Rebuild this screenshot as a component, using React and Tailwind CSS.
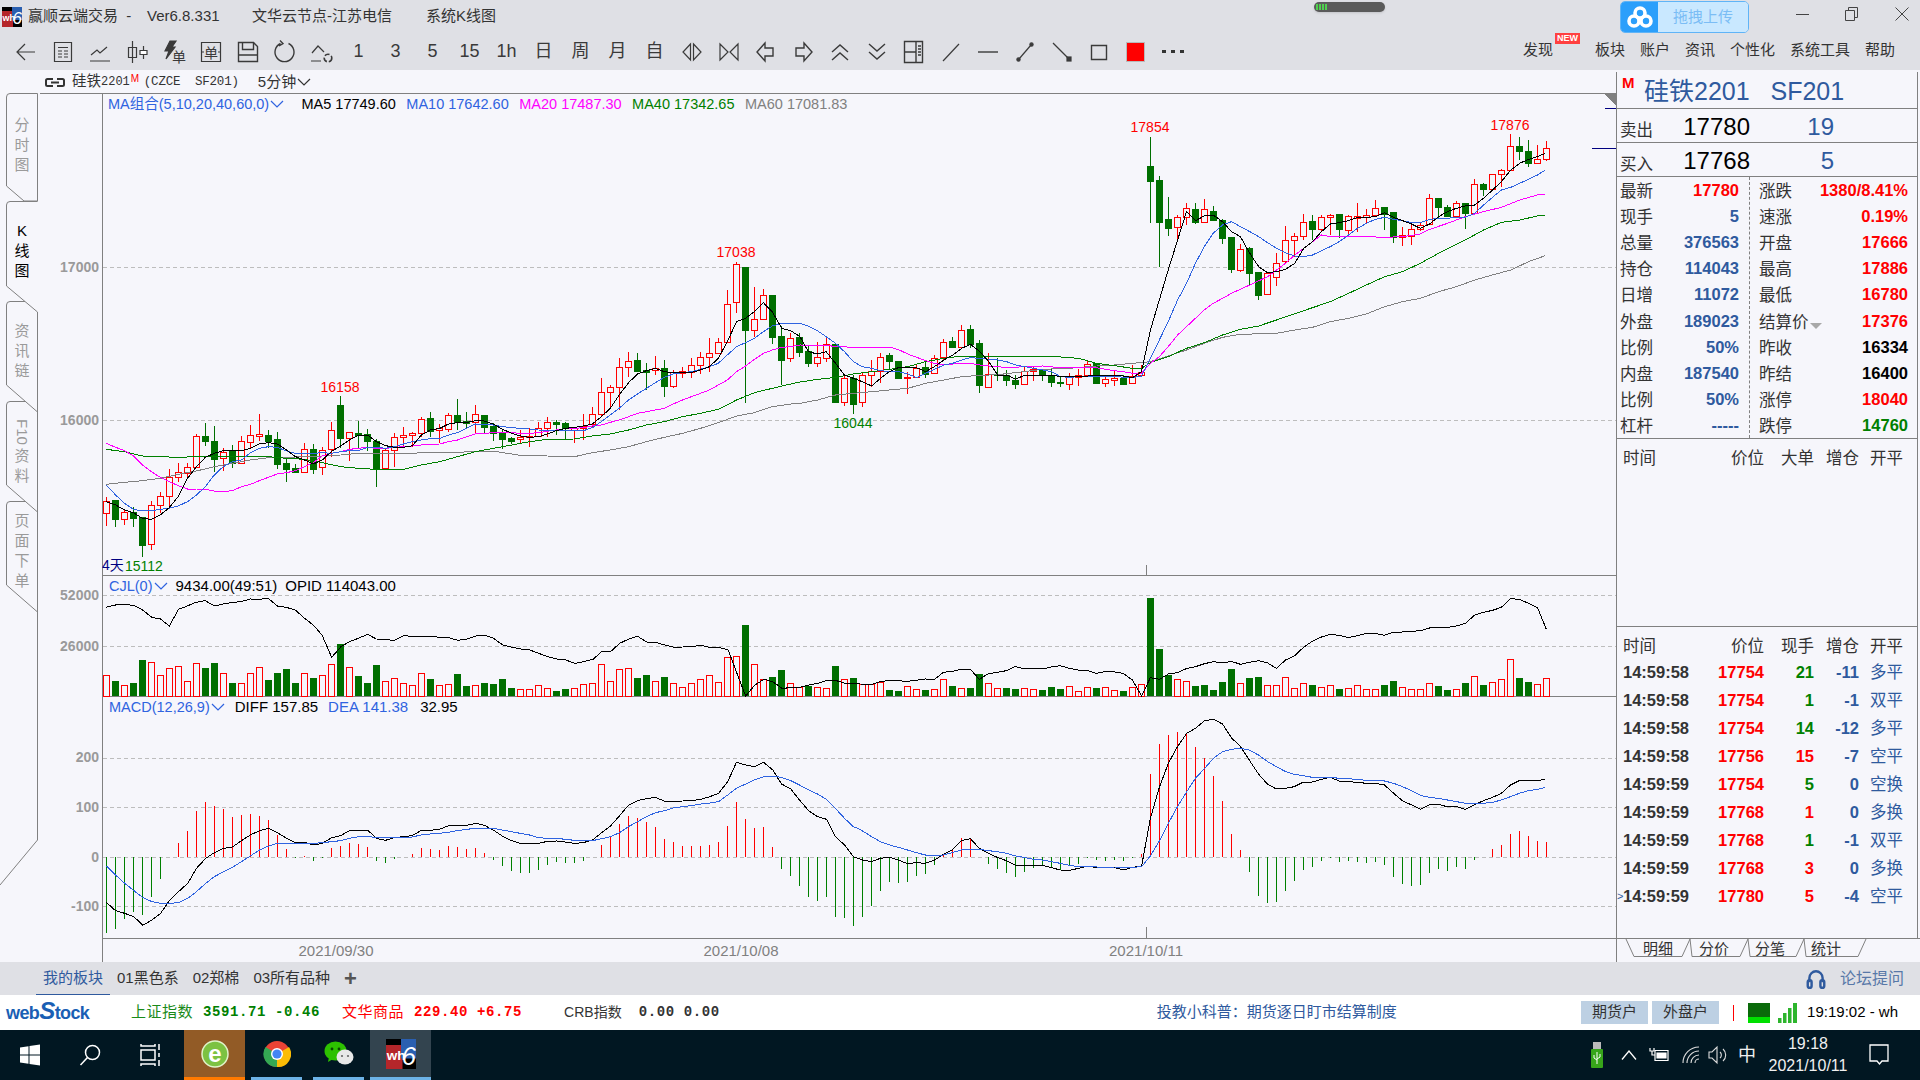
import React from "react";

const BG = "#f6f6fb";
const RED = "#ff0000";
const GREEN = "#006f00";

// zoom-crop readings, turned into page coordinates below
const fromA = ([x, y]) => [100 + x / 2.24, 240 + y / 3];
const fromB = ([x, y]) => [800 + x / 1.912, 100 + y / 3];
const fromV1 = ([x, y]) => [100 + x / 2.063, 570 + y / 3];
const fromV2 = ([x, y]) => [860 + x / 2.063, 570 + y / 3];

// [red?, high, bodyTop, bodyBottom, low]
const candlesA = [
  [1,770,782,820,858],[0,780,780,838,860],[1,808,817,838,855],[0,800,817,833,862],[0,830,832,914,950],[1,782,794,913,930],[1,755,767,795,820],[1,687,712,767,797],
  [1,670,695,710,727],[1,668,682,698,712],[1,582,589,680,685],[0,548,588,603,617],[0,558,603,656,697],[1,625,635,655,693],[0,615,631,668,685],[1,588,604,668,672],
  [1,556,586,605,625],[1,522,583,587,603],[0,570,586,603,625],[0,577,598,671,687],[0,650,670,686,725],[0,672,685,697,700],[1,610,628,697,700],[0,612,628,686,702],
  [1,620,629,682,704],[1,546,571,628,650],[0,468,495,593,625],[1,575,577,595,662],[0,543,580,584,625],[0,567,583,602,632],[0,598,603,688,740],[1,625,631,683,690],
  [1,578,590,631,680],[1,562,586,590,620],[1,575,580,586,620],[1,532,538,580,590],[0,516,534,573,590],[1,552,565,570,608],[1,520,526,566,575],[0,477,525,546,570],
  [0,516,543,549,565],[1,495,523,547,580],[0,525,526,560,580],[0,548,558,579,602],[0,570,578,596,628],[0,590,595,603,612],[1,570,592,598,610],[1,565,588,592,620],
  [1,545,565,588,590],[1,532,547,565,590],[0,540,546,551,585],[0,545,549,565,598],[1,560,565,570,608],[1,522,557,565,600],[1,500,523,553,565],[1,415,455,523,530],
  [1,435,442,455,505],[1,355,380,442,510],[1,337,362,380,410],[0,340,360,392,395],[0,370,391,397,450],[1,348,385,390,405],[0,360,385,437,472],[1,390,397,437,445],
  [1,380,394,398,415],[1,355,374,396,415],[1,335,352,374,402],[1,294,338,352,395],[1,295,305,338,340],[1,150,193,305,310],[1,65,73,185,220],[0,80,80,270,488],
  [1,140,238,271,290],[1,148,166,236,240],[0,165,165,290,312],[0,258,289,360,435],[1,280,293,355,365],
];
const candlesB = [
  [0,700,712,755,770],[0,735,752,790,800],[1,725,772,788,800],[1,710,732,773,785],[0,730,732,905,908],[1,822,835,905,918],[0,825,835,912,942],[1,815,825,907,920],
  [1,780,812,825,860],[1,760,770,812,850],[0,758,766,782,810],[0,782,782,833,835],[1,815,832,835,882],[1,795,803,832,835],[0,785,802,822,835],[1,765,773,820,822],
  [1,718,725,772,780],[0,710,724,740,745],[1,675,689,740,745],[0,675,687,733,745],[0,720,730,855,878],[1,760,823,860,860],[0,775,823,826,842],[0,810,825,840,858],
  [0,825,840,852,866],[1,800,812,851,855],[1,800,808,813,842],[0,808,808,825,842],[0,805,825,845,860],[0,828,845,848,860],[1,820,832,851,870],[1,808,824,832,858],
  [1,780,793,825,830],[0,790,790,848,850],[1,825,838,848,860],[1,812,835,839,858],[0,825,833,851,852],[1,795,828,848,850],[1,795,815,825,830],[0,110,198,243,370],
  [0,228,240,365,500],[0,292,357,383,408],[1,345,352,380,420],[1,308,325,352,375],[0,310,327,365,372],[1,297,328,365,368],[0,318,333,360,362],[0,358,360,413,432],
  [0,410,412,507,518],[1,432,448,510,515],[0,440,444,520,558],[0,516,516,585,600],[1,515,518,583,585],[1,458,490,532,558],[1,378,421,482,490],[1,398,407,421,470],
  [1,342,367,407,420],[0,345,363,387,420],[1,345,352,386,395],[1,342,344,352,405],[0,343,343,387,415],[1,345,349,389,405],[1,310,349,353,395],[1,327,344,352,368],
  [1,300,325,345,350],[0,322,322,343,390],[0,335,336,412,430],[1,380,406,411,437],[1,375,388,407,435],[1,365,375,388,392],[1,282,295,372,375],[0,295,295,320,358],
  [0,315,322,348,350],[1,303,310,347,350],[0,310,310,340,387],[1,238,253,338,340],[0,250,252,266,288],[1,222,223,266,268],[1,208,211,223,260],[1,102,139,209,212],
  [0,112,139,152,180],[0,120,153,188,200],[1,135,178,190,192],[1,123,145,178,183],
];
const candles = [
  ...candlesA.map(([r, ...v]) => [r, ...v.map((y) => 240 + y / 3)]),
  ...candlesB.map(([r, ...v]) => [r, ...v.map((y) => 100 + y / 3)]),
];

const ma5 = [
  ...[[14,785],[35,795],[55,810],[75,818],[95,835],[115,838],[135,825],[155,803],[175,770],[196,715],[216,680],[236,652],[256,640],[276,632],[297,632],[317,632],[337,625],[357,612],[377,608],[397,612],[418,630],[438,650],[458,660],[478,672],[498,660],[518,635],[539,618],[559,600],[579,585],[599,585],[619,605],[640,617],[660,622],[680,622],[700,617],[720,585],[740,570],[761,565],[781,552],[801,548],[821,548],[841,542],[861,543],[881,552],[902,568],[922,580],[942,588],[962,592],[982,590],[1002,582],[1022,572],[1043,565],[1063,562],[1083,558],[1103,552],[1123,530],[1143,505],[1163,465],[1184,428],[1204,402],[1224,392],[1244,385],[1264,395],[1284,398],[1305,398],[1325,397],[1345,390],[1365,380],[1385,355],[1405,305],[1426,245],[1446,235],[1466,215],[1486,188],[1506,215],[1527,265],[1547,272]].map(fromA),
  ...[[0,710],[16,755],[33,762],[50,755],[68,790],[85,825],[102,835],[119,845],[137,858],[154,835],[171,815],[188,803],[206,803],[223,803],[240,815],[257,800],[275,780],[292,765],[309,745],[326,733],[344,755],[361,785],[378,825],[395,825],[412,838],[430,825],[447,825],[464,825],[481,825],[498,830],[515,830],[533,828],[550,828],[567,826],[584,826],[601,826],[618,828],[636,833],[653,815],[670,690],[687,600],[704,510],[722,420],[739,335],[756,362],[773,348],[790,345],[808,365],[825,395],[842,410],[860,460],[877,500],[894,518],[911,515],[928,508],[946,490],[963,445],[980,425],[997,395],[1014,372],[1031,368],[1049,362],[1066,352],[1083,352],[1100,350],[1118,338],[1135,352],[1152,362],[1169,372],[1186,385],[1204,372],[1221,350],[1238,335],[1255,325],[1272,318],[1290,315],[1307,295],[1324,270],[1341,245],[1359,210],[1376,190],[1393,178],[1410,170],[1425,160]].map(fromB),
];
const ma10 = [
  ...[[14,735],[35,765],[55,790],[75,808],[95,813],[115,812],[135,808],[155,805],[175,798],[196,785],[216,765],[236,740],[256,705],[276,680],[297,665],[317,660],[337,638],[357,625],[377,620],[397,622],[418,633],[438,640],[458,642],[478,640],[498,638],[518,640],[539,635],[559,632],[579,632],[599,622],[619,622],[640,625],[660,620],[680,612],[700,605],[720,600],[740,596],[761,595],[781,585],[801,578],[821,565],[841,552],[861,553],[881,555],[902,560],[922,563],[942,565],[962,567],[982,570],[1002,572],[1022,573],[1043,572],[1063,573],[1083,572],[1103,563],[1123,545],[1143,525],[1163,505],[1184,480],[1204,462],[1224,445],[1244,428],[1264,412],[1284,402],[1305,398],[1325,395],[1345,388],[1365,380],[1385,370],[1405,345],[1426,320],[1446,308],[1466,295],[1486,275],[1506,258],[1527,250],[1547,250]].map(fromA),
  ...[[0,670],[16,678],[33,692],[50,710],[68,730],[85,755],[102,785],[119,800],[137,805],[154,812],[171,815],[188,815],[206,822],[223,833],[240,820],[257,808],[275,795],[292,790],[309,780],[326,773],[344,775],[361,778],[378,780],[395,785],[412,795],[430,800],[447,805],[464,810],[481,815],[498,830],[515,832],[533,830],[550,828],[567,828],[584,828],[601,828],[618,832],[636,833],[653,828],[670,775],[687,720],[704,665],[722,600],[739,550],[756,490],[773,440],[790,400],[808,375],[825,365],[842,380],[860,395],[877,410],[894,428],[911,445],[928,458],[946,468],[963,470],[980,465],[997,452],[1014,440],[1031,425],[1049,405],[1066,385],[1083,370],[1100,358],[1118,352],[1135,358],[1152,362],[1169,368],[1186,368],[1204,358],[1221,355],[1238,355],[1255,352],[1272,352],[1290,340],[1307,315],[1324,292],[1341,270],[1359,262],[1376,250],[1393,238],[1410,225],[1425,210]].map(fromB),
];
const ma20 = [
  ...[[14,610],[35,622],[55,632],[75,648],[95,675],[115,695],[135,712],[155,725],[175,737],[196,747],[216,747],[236,748],[256,753],[276,755],[297,752],[317,740],[337,733],[357,722],[377,712],[397,702],[418,698],[438,692],[458,680],[478,668],[498,648],[518,640],[539,635],[559,628],[579,625],[599,622],[619,625],[640,625],[660,622],[680,620],[700,618],[720,615],[740,613],[761,612],[781,605],[801,600],[821,590],[841,582],[861,580],[881,578],[902,578],[922,578],[942,580],[962,580],[982,578],[1002,574],[1022,570],[1043,566],[1063,565],[1083,563],[1103,558],[1123,555],[1143,547],[1163,540],[1184,530],[1204,520],[1224,515],[1244,510],[1264,505],[1284,492],[1305,480],[1325,470],[1345,460],[1365,450],[1385,435],[1405,420],[1426,395],[1446,378],[1466,358],[1486,340],[1506,330],[1527,322],[1547,320]].map(fromA),
  ...[[0,735],[50,737],[100,742],[137,743],[175,743],[190,750],[206,762],[223,772],[240,782],[257,790],[275,795],[292,792],[309,790],[326,790],[344,795],[361,798],[378,800],[395,803],[430,800],[464,798],[498,803],[533,803],[567,803],[584,808],[601,812],[618,815],[636,820],[653,820],[670,790],[687,770],[704,740],[722,705],[739,680],[756,655],[773,630],[790,610],[808,595],[825,580],[860,555],[894,530],[928,490],[946,465],[963,445],[980,425],[997,405],[1014,410],[1049,410],[1083,410],[1118,412],[1152,410],[1186,402],[1204,388],[1238,370],[1272,350],[1307,335],[1341,322],[1376,300],[1410,285],[1425,282]].map(fromB),
];
const ma40 = [
  ...[[14,628],[55,635],[95,648],[135,650],[175,652],[216,650],[256,650],[297,649],[337,649],[377,650],[418,655],[458,658],[498,668],[539,680],[579,685],[619,688],[680,688],[720,675],[761,665],[801,650],[841,635],[881,625],[922,615],[962,605],[1002,598],[1063,597],[1103,588],[1143,582],[1184,570],[1224,555],[1264,545],[1305,530],[1345,520],[1385,508],[1426,480],[1466,458],[1506,445],[1547,432]].map(fromA),
  ...[[0,846],[34,838],[68,832],[102,822],[137,815],[171,808],[206,800],[240,785],[275,775],[309,768],[344,768],[378,770],[430,770],[490,770],[533,775],[567,790],[601,797],[636,805],[653,805],[670,788],[704,770],[739,745],[773,728],[808,705],[842,688],[877,678],[911,660],[963,632],[1014,605],[1049,580],[1083,555],[1118,530],[1152,515],[1186,490],[1221,460],[1272,420],[1307,390],[1341,367],[1376,360],[1410,348],[1425,346]].map(fromB),
];
const ma60 = [
  ...[[14,733],[55,727],[95,722],[135,715],[175,703],[216,693],[256,680],[297,670],[337,660],[377,653],[418,652],[458,650],[498,648],[539,645],[579,640],[619,640],[680,640],[740,638],[801,637],[861,633],[881,633],[902,638],[942,646],[1002,648],[1063,650],[1103,638],[1143,630],[1184,620],[1224,605],[1264,592],[1305,580],[1345,565],[1385,548],[1426,528],[1466,518],[1506,500],[1547,492]].map(fromA),
  ...[[0,910],[34,900],[68,885],[102,880],[137,875],[171,870],[206,865],[240,850],[275,840],[309,830],[344,826],[378,824],[412,818],[464,808],[515,805],[567,798],[601,795],[636,790],[670,785],[704,768],[739,750],[773,730],[808,712],[842,703],[911,700],[946,690],[980,682],[1014,665],[1049,655],[1083,642],[1118,620],[1152,605],[1186,595],[1221,575],[1255,560],[1290,540],[1324,525],[1359,510],[1393,485],[1425,467]].map(fromB),
];

// volume bars: [red?, top] on the zoom scale, baseline 378
const volume = [
  [1,316],[0,333],[1,346],[0,339],[0,270],[1,277],[1,316],[1,295],[1,289],[1,334],[1,280],[0,294],[0,279],[1,310],[0,339],[1,340],[1,310],[1,292],[0,330],[0,309],[0,297],[0,339],[1,310],[0,324],[1,316],[1,283],[0,222],[1,292],[0,318],[0,339],[0,285],[1,332],[1,325],[1,340],[1,346],[1,310],[0,327],[1,346],[1,343],[0,312],[0,348],[1,346],[0,339],[0,342],[0,327],[0,354],[1,358],[1,358],[1,346],[1,354],[0,363],[0,357],[1,354],[1,343],[1,340],[1,283],[1,332],[1,298],[1,295],[0,324],[0,315],[1,334],[0,321],[1,340],[1,352],[1,340],[1,328],[1,316],[1,337],[1,262],[1,259],[0,165],[1,283],[1,328],[0,321],[0,300],[1,340],[1,352],[0,348],[1,352],[1,355],[0,288],[1,328],[0,324],
  [1,342],[1,342],[1,337],[0,360],[0,363],[1,349],[1,358],[0,360],[1,358],[1,328],[0,348],[1,355],[0,354],[0,312],[1,340],[1,355],[0,354],[0,357],[1,355],[1,358],[0,360],[0,351],[0,357],[1,349],[1,364],[1,352],[0,354],[1,352],[1,361],[0,363],[1,352],[1,343],[0,84],[0,237],[0,315],[1,328],[1,334],[0,348],[0,345],[0,360],[0,336],[0,297],[1,340],[0,324],[0,321],[1,346],[1,346],[1,322],[1,355],[1,340],[0,345],[1,352],[1,346],[0,357],[1,355],[1,346],[1,358],[1,358],[0,345],[0,333],[1,352],[1,358],[1,358],[1,340],[0,348],[0,360],[1,358],[0,339],[1,319],[0,345],[1,337],[1,328],[1,268],[0,324],[0,336],[1,343],[1,325],
];
const cjl = [
  ...[[12,112],[35,104],[55,103],[72,108],[88,120],[107,142],[125,147],[143,168],[162,118],[180,108],[198,97],[217,92],[236,108],[254,102],[273,97],[291,95],[310,87],[328,88],[347,85],[366,108],[384,112],[403,120],[422,145],[440,165],[458,195],[478,262],[497,230],[515,215],[533,205],[552,193],[570,207],[589,208],[606,212],[626,197],[645,199],[664,199],[682,200],[720,203],[738,211],[757,207],[775,198],[794,196],[812,205],[831,225],[850,232],[868,237],[887,240],[905,250],[924,260],[943,267],[961,270],[980,280],[998,275],[1017,268],[1035,245],[1054,244],[1072,220],[1091,207],[1109,199],[1128,216],[1146,217],[1165,225],[1184,232],[1202,231],[1221,230],[1240,226],[1258,232],[1277,232],[1296,240],[1314,310],[1332,378],[1351,345],[1370,328],[1388,335],[1407,355],[1426,353],[1444,352],[1463,345],[1481,340],[1500,331],[1519,332],[1537,340]].map(fromV1),
  ...[[0,342],[24,343],[42,335],[61,331],[98,334],[135,327],[154,328],[172,307],[190,304],[209,298],[228,298],[246,328],[265,311],[283,307],[302,302],[320,290],[339,296],[376,297],[395,291],[413,287],[432,295],[450,300],[469,301],[487,310],[506,305],[525,306],[543,310],[562,330],[581,378],[599,323],[618,328],[636,312],[655,308],[673,296],[692,290],[711,281],[729,275],[748,279],[766,274],[785,283],[803,277],[822,272],[840,278],[859,295],[878,270],[896,258],[915,232],[933,214],[952,201],[970,193],[989,196],[1007,203],[1026,197],[1045,190],[1063,190],[1082,196],[1100,187],[1119,186],[1138,184],[1156,182],[1175,174],[1193,172],[1212,172],[1230,168],[1249,160],[1268,135],[1286,127],[1305,121],[1323,112],[1342,86],[1360,88],[1379,100],[1398,114],[1416,178]].map(fromV2),
];

// MACD bars: end y on the zoom scale, zero at 862
const macdBars = [
  1088,1076,1046,1026,1034,980,926,862,820,783,723,697,708,717,741,736,733,737,750,795,838,863,858,873,865,834,827,818,822,830,873,879,866,862,853,833,837,840,828,831,837,834,849,870,888,903,909,908,900,885,875,880,880,873,860,826,802,762,738,744,756,770,807,816,828,828,828,825,816,768,696,747,774,771,831,897,918,947,980,992,980,1040,1043,1067,
  1040,1008,963,936,938,935,917,912,885,853,838,804,804,862,882,897,908,920,905,893,888,895,900,888,882,863,870,873,870,873,863,853,612,522,495,487,490,530,565,618,693,792,840,906,978,998,995,963,932,900,891,873,863,877,873,875,879,877,885,921,942,947,945,908,897,902,891,897,870,860,837,825,792,783,798,813,816,
];
const diff = [
  ...[[13,997],[32,1022],[51,1030],[70,1040],[88,1066],[107,1050],[125,1030],[144,990],[162,965],[181,940],[199,895],[218,865],[236,848],[255,835],[273,831],[292,812],[310,795],[329,782],[348,775],[366,788],[385,805],[403,818],[422,817],[440,825],[459,820],[478,803],[496,797],[515,782],[533,780],[552,780],[570,805],[589,811],[607,803],[626,800],[644,797],[662,782],[681,781],[700,778],[718,768],[737,766],[756,766],[775,760],[793,766],[811,780],[830,798],[849,812],[867,820],[886,821],[905,820],[923,814],[942,813],[960,816],[979,820],[997,818],[1016,810],[1035,788],[1053,768],[1072,737],[1090,706],[1109,692],[1127,686],[1146,682],[1165,694],[1183,694],[1202,693],[1220,692],[1239,688],[1258,680],[1276,670],[1295,635],[1313,577],[1332,585],[1350,590],[1369,577],[1388,600],[1406,642],[1425,657],[1443,690],[1462,722],[1480,740],[1499,748],[1517,800],[1536,825],[1554,860]].map(fromV1),
  ...[[5,870],[24,875],[42,865],[61,862],[79,870],[98,881],[116,878],[135,880],[154,870],[172,853],[190,840],[209,812],[228,806],[246,835],[265,850],[283,862],[302,872],[321,886],[339,886],[358,886],[376,886],[395,893],[413,900],[432,901],[451,895],[469,888],[488,893],[506,894],[525,893],[544,900],[562,892],[581,888],[599,745],[618,650],[636,580],[655,530],[674,490],[692,475],[711,452],[729,448],[748,462],[766,503],[785,530],[803,570],[822,612],[841,643],[859,657],[878,655],[896,650],[915,636],[933,636],[952,628],[970,622],[989,633],[1008,635],[1026,637],[1045,640],[1064,640],[1082,645],[1101,670],[1119,692],[1138,705],[1156,718],[1175,704],[1193,702],[1212,711],[1231,710],[1249,718],[1268,704],[1286,692],[1305,682],[1323,670],[1342,645],[1360,632],[1379,632],[1398,632],[1414,628]].map(fromV2),
];
const dea = [
  ...[[13,888],[32,915],[51,940],[70,962],[88,982],[107,995],[125,1000],[144,1000],[162,998],[181,985],[199,965],[218,940],[236,920],[255,905],[273,892],[292,875],[310,858],[329,840],[348,828],[366,820],[385,820],[403,820],[422,820],[440,820],[459,818],[478,815],[496,812],[515,805],[533,800],[552,800],[570,802],[589,803],[607,803],[626,802],[644,801],[662,795],[681,792],[700,790],[718,787],[737,782],[756,778],[775,775],[793,775],[811,775],[830,780],[849,785],[867,790],[886,795],[905,803],[923,805],[942,805],[960,808],[979,811],[997,812],[1016,812],[1035,806],[1053,800],[1072,788],[1090,770],[1109,755],[1127,740],[1146,728],[1165,722],[1183,714],[1202,710],[1220,707],[1239,702],[1258,699],[1276,695],[1295,675],[1313,655],[1332,642],[1350,630],[1369,620],[1388,618],[1406,622],[1425,632],[1443,645],[1462,660],[1480,672],[1499,688],[1517,715],[1536,745],[1554,770]].map(fromV1),
  ...[[0,778],[24,800],[42,815],[61,825],[79,832],[98,840],[116,848],[135,855],[154,858],[172,855],[190,848],[209,840],[228,838],[246,838],[265,842],[283,845],[302,850],[321,858],[339,862],[358,868],[376,870],[395,875],[413,880],[432,886],[451,890],[469,890],[488,891],[525,891],[544,892],[562,892],[581,890],[599,858],[618,812],[636,760],[655,710],[674,665],[692,625],[711,595],[729,565],[748,545],[766,538],[785,535],[803,540],[822,555],[841,575],[859,590],[878,605],[896,613],[915,617],[933,622],[970,623],[1008,626],[1045,631],[1082,633],[1101,640],[1119,650],[1138,662],[1156,676],[1175,682],[1193,685],[1212,690],[1231,695],[1249,700],[1268,700],[1286,700],[1305,697],[1323,690],[1342,680],[1360,670],[1379,662],[1398,658],[1414,652]].map(fromV2),
];

const Line = ({ pts, color }) => (
  <polyline points={pts.map((p) => p.join(",")).join(" ")} fill="none" stroke={color} strokeWidth="1" />
);

const Grid = ({ ys }) =>
  ys.map((y) => <line key={y} x1="103" x2="1616" y1={y + 0.5} y2={y + 0.5} stroke="#bdbdbd" strokeDasharray="4 3" />);

const AxisText = ({ y, children }) => (
  <text x="99" y={y + 5} textAnchor="end" fontSize="14" fontWeight="700" fill="#9a9a9a">{children}</text>
);

const Chevron = ({ className = "stroke-[#2f63e0]" }) => (
  <svg width="14" height="8" viewBox="0 0 14 8" className={`fill-none ${className}`}>
    <path d="M1 1l6 6 6-6" strokeWidth="1.2" />
  </svg>
);

const PriceChart = () => (
  <svg viewBox="103 94 1513 481" width="1513" height="481" className="block overflow-visible" shapeRendering="crispEdges">
    <Grid ys={[267, 420]} />
    {candles.map(([isRed, hi, top, bot, lo], i) => {
      const left = 103 + 9 * i;
      const color = isRed ? RED : GREEN;
      const t = Math.round(top);
      const b = Math.max(Math.round(bot), t + 1);
      return (
        <g key={i}>
          <line x1={left + 3.5} x2={left + 3.5} y1={Math.round(hi)} y2={Math.round(lo)} stroke={color} />
          {isRed ? (
            <rect x={left + 0.5} y={t + 0.5} width="6" height={b - t} fill={BG} stroke={RED} />
          ) : (
            <rect x={left} y={t} width="7" height={b - t + 1} fill={GREEN} />
          )}
        </g>
      );
    })}
    <Line pts={ma60} color="#808080" />
    <Line pts={ma40} color="#008000" />
    <Line pts={ma20} color="#ff00ff" />
    <Line pts={ma10} color="#2f63e0" />
    <Line pts={ma5} color="#000000" />
    <line x1="1146.5" x2="1146.5" y1="565" y2="575" stroke="#808080" />
    <line x1="1592" x2="1616" y1="148.5" y2="148.5" stroke="#000080" />
    <line x1="1605" x2="1616" y1="108.5" y2="108.5" stroke="#000080" />
    <path d="M1604 94H1616V106Z" fill="#808080" />
    <g fontSize="14" shapeRendering="auto">
      <text x="340" y="392" textAnchor="middle" fill={RED}>16158</text>
      <text x="736" y="257" textAnchor="middle" fill={RED}>17038</text>
      <text x="1150" y="132" textAnchor="middle" fill={RED}>17854</text>
      <text x="1510" y="130" textAnchor="middle" fill={RED}>17876</text>
      <text x="853" y="428" textAnchor="middle" fill="#008000">16044</text>
      <text x="125" y="571" fill="#008000">15112</text>
      <text x="102" y="570" fill="#000080">4天</text>
    </g>
    <g shapeRendering="auto"><AxisText y={267}>17000</AxisText><AxisText y={420}>16000</AxisText></g>
  </svg>
);

const VolumeChart = () => (
  <svg viewBox="103 576 1513 120" width="1513" height="120" className="block overflow-visible" shapeRendering="crispEdges">
    <Grid ys={[595, 646]} />
    {volume.map(([isRed, top], i) => {
      const left = 103 + 9 * i;
      const y = Math.round(570 + top / 3);
      return isRed ? (
        <rect key={i} x={left + 0.5} y={y + 0.5} width="6" height={696 - y} fill={BG} stroke={RED} />
      ) : (
        <rect key={i} x={left} y={y} width="7" height={696 - y} fill={GREEN} />
      );
    })}
    <Line pts={cjl} color="#000000" />
    <g shapeRendering="auto"><AxisText y={595}>52000</AxisText><AxisText y={646}>26000</AxisText></g>
  </svg>
);

const MacdChart = () => (
  <svg viewBox="103 697 1513 241" width="1513" height="241" className="block overflow-visible" shapeRendering="crispEdges">
    <Grid ys={[758, 807, 857, 906]} />
    {macdBars.map((y, i) => {
      const x = 103 + 9 * i + 3.5;
      const end = Math.round(570 + y / 3);
      return <line key={i} x1={x} x2={x} y1="857" y2={end} stroke={y < 862 ? RED : "#008000"} />;
    })}
    <Line pts={diff} color="#000000" />
    <Line pts={dea} color="#2f63e0" />
    <line x1="1146.5" x2="1146.5" y1="927" y2="938" stroke="#808080" />
    <g shapeRendering="auto">
      <AxisText y={757}>200</AxisText><AxisText y={807}>100</AxisText><AxisText y={857}>0</AxisText><AxisText y={906}>-100</AxisText>
    </g>
  </svg>
);

// toolbar glyphs
const Ic = ({ children }) => (
  <svg width="24" height="24" viewBox="0 0 24 24" className="fill-none stroke-[#3a3a3a]" strokeWidth="1.2">{children}</svg>
);
const tools = [
  <Ic><path d="M21 12H4M11 4l-8 8 8 8" /></Ic>,
  <Ic><path d="M3.5 2.5h17v19h-17zM7 7.5h10M7 11h4M13 11h4M7 14h4M13 14h4M7 17h4M13 17h4" /></Ic>,
  <Ic><path d="M3 15l6-5 3 3 7-6M2 21h20" /></Ic>,
  <Ic><path d="M7.5 1v22M3.5 7.5h8v10h-8zM18.5 6v13" /><path d="M15 10.5h7v4h-7z" fill="#fff" /></Ic>,
  <Ic><path d="M8 1h6l-4 6h3L4 19l3-8H3z" fill="#3a3a3a" /><text x="10" y="22" fontSize="14" fill="#3a3a3a" stroke="none">单</text></Ic>,
  <Ic><path d="M2.5 2.5h19v19h-19zM2 12h3M19 12h3" /><text x="5" y="18" fontSize="14" fill="#3a3a3a" stroke="none">单</text></Ic>,
  <Ic><path d="M2.5 2.5h15l4 4v15h-19zM6.5 2.5v7h11v-7M2.5 15h19" strokeWidth="1.4" /></Ic>,
  <Ic><path d="M15.5 3.5A9.5 9.5 0 1 1 7.5 3.5M7 .5l3 3-4 2.5" strokeWidth="1.4" /></Ic>,
  <Ic><path d="M1 21h10M2 13l6-7 6 6" /><circle cx="18" cy="18" r="3.8" strokeDasharray="5 2" strokeWidth="1.6" /></Ic>,
  "1", "3", "5", "15", "1h", "日", "周", "月", "自",
  <Ic><path d="M10.5 4L3 12l7.5 8zM13.5 4L21 12l-7.5 8z" /></Ic>,
  <Ic><path d="M3 4l8 8-8 8zM21 4l-8 8 8 8z" /></Ic>,
  <Ic><path d="M11 3L3 12l8 9v-5h8V8h-8z" strokeWidth="1.4" /></Ic>,
  <Ic><path d="M13 3l8 9-8 9v-5H5V8h8z" strokeWidth="1.4" /></Ic>,
  <Ic><path d="M4 12l8-7 8 7M4 20l8-7 8 7" strokeWidth="1.4" /></Ic>,
  <Ic><path d="M4 4l8 7 8-7M4 12l8 7 8-7" strokeWidth="1.4" /></Ic>,
  <Ic><path d="M2.5 1.5h18v21h-18zM14 1.5v21M2.5 12h11.5M16 6h3M16 9h3M16 12h3M16 15h3" strokeWidth="1.4" /></Ic>,
  <Ic><path d="M4 21L20 4" /></Ic>,
  <Ic><path d="M2 12h20" strokeWidth="1.4" /></Ic>,
  <Ic><path d="M6 19L18 5" /><circle cx="5.5" cy="19.5" r="1.6" fill="#3a3a3a" /><circle cx="18.5" cy="4.5" r="1.6" fill="#3a3a3a" /></Ic>,
  <Ic><path d="M3 3l16 16" /><rect x="17" y="17" width="4" height="4" fill="#3a3a3a" /></Ic>,
  <Ic><path d="M4.5 5.5h15v14h-15z" strokeWidth="1.4" /></Ic>,
  <span className="block w-[19px] h-[20px] bg-[#ff0000] border border-[#b9b9b9]" />,
  <span className="flex gap-[5px]"><i className="w-[4px] h-[3px] bg-[#333]" /><i className="w-[4px] h-[3px] bg-[#333]" /><i className="w-[4px] h-[3px] bg-[#333]" /></span>,
];

const WhLogo = ({ size = 20 }) => (
  <svg width={size} height={size} viewBox="0 0 20 20" className="shrink-0">
    <rect width="20" height="20" fill="#000" />
    <rect y="4" width="11" height="16" fill="#b5262a" />
    <rect x="10" width="10" height="13" fill="#2a5fb0" />
    <text x="0.5" y="14" fontSize="9" fontWeight="700" fill="#fff">wh</text>
    <text x="10.5" y="17" fontSize="17" fontStyle="italic" fill="#fff">6</text>
  </svg>
);

const quoteLeft = [
  ["最新", "17780", "text-[#ff0000]"], ["现手", "5", "text-[#2f5a9e]"], ["总量", "376563", "text-[#2f5a9e]"], ["持仓", "114043", "text-[#2f5a9e]"], ["日增", "11072", "text-[#2f5a9e]"],
  ["外盘", "189023", "text-[#2f5a9e]"], ["比例", "50%", "text-[#2f5a9e]"], ["内盘", "187540", "text-[#2f5a9e]"], ["比例", "50%", "text-[#2f5a9e]"], ["杠杆", "-----", "text-[#2f5a9e]"],
];
const quoteRight = [
  ["涨跌", "1380/8.41%", "text-[#ff0000]"], ["速涨", "0.19%", "text-[#ff0000]"], ["开盘", "17666", "text-[#ff0000]"], ["最高", "17886", "text-[#ff0000]"], ["最低", "16780", "text-[#ff0000]"],
  ["结算价", "17376", "text-[#ff0000]"], ["昨收", "16334", "text-black"], ["昨结", "16400", "text-black"], ["涨停", "18040", "text-[#ff0000]"], ["跌停", "14760", "text-[#008000]"],
];
// time, price, hand, hand colour, change, action
const ticks = [
  ["14:59:58", "17754", "21", 0, "-11", "多平"], ["14:59:58", "17754", "1", 0, "-1", "双平"], ["14:59:58", "17754", "14", 0, "-12", "多平"],
  ["14:59:58", "17756", "15", 1, "-7", "空平"], ["14:59:59", "17754", "5", 0, "0", "空换"], ["14:59:59", "17768", "1", 1, "0", "多换"],
  ["14:59:59", "17768", "1", 0, "-1", "双平"], ["14:59:59", "17768", "3", 1, "0", "多换"], ["14:59:59", "17780", "5", 1, "-4", "空平"],
];

const TableHead = ({ third }) => (
  <div className="flex items-center pl-[6px] text-[16.5px] leading-[20px] text-[#333] h-[25px]">
    <span className="w-[90px]">时间</span>
    <span className="w-[51px] text-right">价位</span>
    <span className="w-[50px] text-right">{third}</span>
    <span className="w-[45px] text-right">增仓</span>
    <span className="ml-[11px]">开平</span>
  </div>
);

const Sidebar = () => (
  <div className="relative w-[102px] shrink-0">
    <svg viewBox="0 94 102 868" width="102" height="868" className="absolute left-0 top-0 overflow-visible fill-none stroke-[#808080]">
      <path d="M37.5 93.5H10Q6.5 93.5 6.5 97V186L24 201H37.5" />
      <path d="M37.5 201.5H10Q6.5 201.5 6.5 205V286L37.5 312" />
      <path d="M25 301.5H10Q6.5 301.5 6.5 305V385L37.5 412" />
      <path d="M25 401.5H10Q6.5 401.5 6.5 405V485L37.5 512" />
      <path d="M25 501.5H10Q6.5 501.5 6.5 505V585L37.5 612" />
      <path d="M37.5 93.5V201M37.5 312V840L0 885" />
    </svg>
    <div className="relative flex flex-col items-start text-[15px] leading-[20px] text-[#9a9a9a]">
      <div className="w-[44px] h-[107px] pt-[21px] text-center flex flex-col">
        <span>分</span><span>时</span><span>图</span>
      </div>
      <div className="w-[44px] h-[100px] pt-[20px] text-center flex flex-col text-black">
        <span>K</span><span>线</span><span>图</span>
      </div>
      <div className="w-[44px] h-[100px] pt-[20px] text-center flex flex-col">
        <span>资</span><span>讯</span><span>链</span>
      </div>
      <div className="w-[44px] h-[100px] pt-[17px] text-center flex flex-col items-center">
        <span className="[writing-mode:vertical-rl] h-[28px] leading-[20px]">F10</span><span>资</span><span>料</span>
      </div>
      <div className="w-[44px] h-[100px] pt-[10px] text-center flex flex-col">
        <span>页</span><span>面</span><span>下</span><span>单</span>
      </div>
    </div>
  </div>
);

const ChartArea = () => (
  <div className="flex-1 flex flex-col border-l border-[#808080]">
    <div className="relative h-[482px] border-b border-[#808080]">
      <PriceChart />
      <div className="absolute left-[5px] top-[1px] flex items-center gap-[10.5px] text-[14.5px] leading-[18px] whitespace-nowrap">
        <span className="flex items-center gap-[1px] text-[#2f63e0] w-[183px]">MA组合(5,10,20,40,60,0)<Chevron /></span>
        <span className="text-black">MA5 17749.60</span>
        <span className="text-[#2f63e0]">MA10 17642.60</span>
        <span className="text-[#ff00ff]">MA20 17487.30</span>
        <span className="text-[#008000]">MA40 17342.65</span>
        <span className="text-[#808080]">MA60 17081.83</span>
      </div>
    </div>
    <div className="relative h-[121px] border-b border-[#808080]">
      <VolumeChart />
      <div className="absolute left-[6px] top-[1px] flex items-center gap-[8px] text-[15px] leading-[18px] text-black whitespace-nowrap">
        <span className="flex items-center gap-[1px] text-[#2f63e0] text-[14.5px]">CJL(0)<Chevron /></span>
        <span>9434.00(49:51)</span>
        <span>OPID 114043.00</span>
      </div>
    </div>
    <div className="relative h-[242px] border-b border-[#808080]">
      <MacdChart />
      <div className="absolute left-[6px] top-[1px] flex items-center gap-[10px] text-[15px] leading-[18px] text-black whitespace-nowrap">
        <span className="flex items-center gap-[1px] text-[#2f63e0] text-[14.5px]">MACD(12,26,9)<Chevron /></span>
        <span>DIFF 157.85</span>
        <span className="text-[#2f63e0]">DEA 141.38</span>
        <span className="ml-[2px]">32.95</span>
      </div>
    </div>
    <div className="relative h-[23px] text-[15px] leading-[23px] text-[#808080]">
      <div className="flex">
        <span className="ml-[195px] w-[76px] text-center">2021/09/30</span>
        <span className="ml-[329px] w-[76px] text-center">2021/10/08</span>
        <span className="ml-[329px] w-[76px] text-center">2021/10/11</span>
      </div>
    </div>
  </div>
);

const RightPanel = () => (
  <div className="w-[304px] shrink-0 flex flex-col border-l border-[#808080] mt-[2px]">
    <div className="w-[301px] border-r border-[#808080] flex-1 flex flex-col">
      <div className="relative h-[37px] flex items-center pl-[27px] pt-[3px] border-b border-[#808080] text-[25px] text-[#2f5a9e] whitespace-pre">
        <span className="absolute left-[5px] top-[1px] text-[15px] leading-[20px] font-bold text-[#ff0000]">M</span>
        硅铁2201   SF201
      </div>
      {[["卖出", "17780", "19"], ["买入", "17768", "5"]].map(([l, p, q]) => (
        <div key={l} className="h-[34px] flex items-center border-b border-[#808080]">
          <span className="w-[65px] pl-[3px] pt-[9px] text-[16.5px] text-[#333]">{l}</span>
          <span className="w-[68px] pt-[2px] text-right text-[24px] text-black">{p}</span>
          <span className="w-[84px] pt-[2px] text-right text-[24px] text-[#2f5a9e]">{q}</span>
        </div>
      ))}
      <div className="h-[262px] flex border-b border-[#808080]">
        <div className="w-[133px] flex flex-col border-r border-dashed border-[#808080]">
          {quoteLeft.map(([l, v, c], i) => (
            <div key={i} className="flex-1 min-h-0 flex items-center justify-between pl-[3px] pr-[10px]">
              <span className="pt-[2px] text-[16.5px] leading-[20px] text-[#333]">{l}</span>
              <span className={`text-[16.5px] leading-[20px] font-bold ${c}`}>{v}</span>
            </div>
          ))}
        </div>
        <div className="flex-1 flex flex-col">
          {quoteRight.map(([l, v, c], i) => (
            <div key={i} className="flex-1 min-h-0 flex items-center justify-between pl-[9px] pr-[9px]">
              <span className="flex items-center pt-[2px] text-[16.5px] leading-[20px] text-[#333]">
                {l}
                {l === "结算价" && <span className="ml-[1px] mt-[8px] w-0 h-0 border-x-[6px] border-x-transparent border-t-[6px] border-t-[#a8a8a8]" />}
              </span>
              <span className={`text-[16.5px] leading-[20px] font-bold ${c}`}>{v}</span>
            </div>
          ))}
        </div>
      </div>
      <div className="h-[188px] pt-[6px] border-b border-[#808080]">
        <TableHead third="大单" />
      </div>
      <div className="h-[31px] pt-[6px]"><TableHead third="现手" /></div>
      {ticks.map(([t, p, h, up, c, a], i) => (
        <div key={i} className="relative h-[28px] flex items-center pl-[6px] text-[16.5px] font-bold">
          {i === 8 && <span className="absolute left-0 text-[11px] font-normal text-[#2f5a9e]">&gt;</span>}
          <span className="w-[90px] text-[#333]">{t}</span>
          <span className="w-[51px] text-right text-[#ff0000]">{p}</span>
          <span className={`w-[50px] text-right ${up ? "text-[#ff0000]" : "text-[#008000]"}`}>{h}</span>
          <span className="w-[45px] text-right text-[#2f5a9e]">{c}</span>
          <span className="ml-[11px] font-normal text-[16.5px] text-[#2f5a9e]">{a}</span>
        </div>
      ))}
    </div>
    <div className="relative h-[24px] border-t border-[#808080] -ml-px">
      <svg viewBox="0 0 304 24" width="304" height="24" className="absolute left-0 top-0 fill-none stroke-[#808080]">
        <path d="M10 0L18 17.5H66L74 0M74 0L76 17.5H124L132 0M132 0L134 17.5H180L188 0M188 0L190 17.5H242L250 0" />
      </svg>
      <div className="relative flex pl-[14px] text-[15px] leading-[20px] text-[#333]">
        {["明细", "分价", "分笔", "统计"].map((t) => (
          <span key={t} className="w-[56px] text-center">{t}</span>
        ))}
      </div>
    </div>
  </div>
);

const Taskbar = () => (
  <div className="h-[50px] bg-[#011722] flex items-stretch text-white">
    <div className="w-[60px] flex items-center justify-center">
      <svg width="22" height="22" viewBox="0 0 22 22" fill="#fff"><path d="M1 3.5l8.5-1.2V10.5H1zM10.5 2.1L21 .6v9.9H10.5zM1 11.5h8.5v8.2L1 18.5zM10.5 11.5H21v9.9l-10.5-1.5z" /></svg>
    </div>
    <div className="w-[60px] flex items-center justify-center">
      <svg width="24" height="24" viewBox="0 0 24 24" className="fill-none stroke-white" strokeWidth="1.5"><circle cx="14.5" cy="9.5" r="7" /><path d="M9.5 14.5L2.5 22" /></svg>
    </div>
    <div className="w-[64px] pr-[4px] flex items-center justify-center">
      <svg width="24" height="24" viewBox="0 0 24 24" className="fill-none stroke-white" strokeWidth="1.5"><path d="M3 1v2h14V1M3 23v-2h14v2M3 7h14v10H3zM21 1v6M21 10v4M21 17v6" /></svg>
    </div>
    <div className="w-[61px] bg-[#925b26] border-b-[3px] border-[#ff7a00] flex items-center justify-center">
      <svg width="28" height="30" viewBox="0 0 28 30">
        <circle cx="14" cy="15" r="13" fill="#7cc242" stroke="#dff3c9" strokeWidth="1.5" />
        <text x="14" y="23" textAnchor="middle" fontSize="24" fontWeight="700" fill="#fff">e</text>
      </svg>
    </div>
    <div className="w-[6px]" />
    <div className="w-[51px] border-b-[3px] border-[#6cb2e6] flex items-center justify-center">
      <svg width="28" height="34" viewBox="0 0 28 28">
        <circle cx="14" cy="14" r="13" fill="#ea4335" />
        <path d="M14 14L26 7A13 13 0 0 1 14 27Z" fill="#fbbc05" />
        <path d="M14 14L14 27A13 13 0 0 1 2.5 7Z" fill="#34a853" />
        <circle cx="14" cy="14" r="6" fill="#fff" />
        <circle cx="14" cy="14" r="4.6" fill="#4285f4" />
      </svg>
    </div>
    <div className="w-[11px]" />
    <div className="w-[51px] border-b-[3px] border-[#6cb2e6] flex items-center justify-center">
      <svg width="30" height="26" viewBox="0 0 30 26">
        <ellipse cx="11.5" cy="10" rx="11" ry="9.5" fill="#2dc100" />
        <path d="M5 16l-1 5 5-3z" fill="#2dc100" />
        <ellipse cx="21" cy="16" rx="8.5" ry="7.5" fill="#e8e8e8" />
        <circle cx="8" cy="8" r="1.4" fill="#0a4a00" /><circle cx="15" cy="8" r="1.4" fill="#0a4a00" />
        <circle cx="18" cy="15" r="1.1" fill="#666" /><circle cx="24" cy="15" r="1.1" fill="#666" />
      </svg>
    </div>
    <div className="w-[6px]" />
    <div className="w-[61px] bg-[#33444f] border-b-[3px] border-[#6cb2e6] flex items-center justify-center">
      <WhLogo size={30} />
    </div>
    <div className="ml-auto flex items-center text-[#f0f0f0]">
      <svg width="12" height="26" viewBox="0 0 12 26" className="mr-[18px]">
        <rect x="2" y="0" width="8" height="7" fill="#bbb" /><rect y="7" width="12" height="19" rx="1" fill="#37a51a" />
        <path d="M6 10v12M3 13v3l3 2M9 12v3l-3 2" stroke="#fff" fill="none" />
      </svg>
      <svg width="16" height="10" viewBox="0 0 16 10" className="mr-[12px] fill-none stroke-white" strokeWidth="1.3"><path d="M1 9.5L8 1l7 8.5" /></svg>
      <svg width="20" height="16" viewBox="0 0 20 16" className="mr-[13px] fill-none stroke-white" strokeWidth="1.2"><path d="M6 3.5h13v10H6z" /><path d="M8 6h9v5H8z" fill="#fff" /><path d="M1 1v3h4V1M3 4v4h3" /></svg>
      <svg width="20" height="18" viewBox="0 0 20 18" className="mr-[6px] fill-none stroke-[#ddd]" strokeWidth="1.1"><path d="M1 17A16 16 0 0 1 17 1M5 17A12 12 0 0 1 17 5M9 17A8 8 0 0 1 17 9M13 17A4 4 0 0 1 17 13" /></svg>
      <svg width="20" height="20" viewBox="0 0 20 20" className="mr-[9px] fill-none stroke-[#ddd]" strokeWidth="1.1"><path d="M1 7h3l5-5v16l-5-5H1zM12 7a4 4 0 0 1 0 6M15 4a8 8 0 0 1 0 12" /></svg>
      <span className="w-[20px] text-[18px] leading-none text-center mr-[11px]">中</span>
      <div className="w-[80px] flex flex-col items-center text-[16px] leading-[22px] mr-[21px]">
        <span>19:18</span>
        <span>2021/10/11</span>
      </div>
      <svg width="20" height="22" viewBox="0 0 20 22" className="mr-[31px] fill-none stroke-white" strokeWidth="1.3"><path d="M1 1h18v16h-6l-2.5 3L8 17H1z" /></svg>
    </div>
  </div>
);

export default function App() {
  return (
    <div className="w-[1920px] h-[1080px] overflow-hidden flex flex-col bg-[#f6f6fb] font-['Liberation_Sans','Noto_Sans_CJK_SC',sans-serif] text-[#333]">
      {/* title bar and toolbar */}
      <div className="h-[70px] bg-[#dfe0e5] shrink-0">
        <div className="relative h-[33px] flex items-center pl-[2px] text-[15px] whitespace-nowrap">
          <WhLogo />
          <span className="ml-[6px] w-[119px]">赢顺云端交易&nbsp; -</span>
          <span className="w-[105px]">Ver6.8.331</span>
          <span className="w-[174px]">文华云节点-江苏电信</span>
          <span>系统K线图</span>
          <div className="absolute left-[1314px] top-[2px] w-[71px] h-[10px] rounded-full bg-[#5a5a5a] flex items-center gap-[1px] pl-[2px] shadow">
            <i className="w-[2px] h-[6px] bg-[#4fd04f]" /><i className="w-[2px] h-[6px] bg-[#4fd04f]" /><i className="w-[2px] h-[6px] bg-[#4fd04f]" /><i className="w-[2px] h-[6px] bg-[#4fd04f]" />
          </div>
          <div className="absolute left-[1620px] top-[1px] w-[129px] h-[32px] rounded-[5px] overflow-hidden flex border border-[#5fb4f7]">
            <div className="w-[37px] bg-[#2b9ffb] flex items-center justify-center">
              <svg width="26" height="24" viewBox="0 0 26 24" className="fill-none stroke-white" strokeWidth="3.6"><circle cx="13" cy="8" r="5" /><circle cx="7" cy="16" r="5" /><circle cx="19" cy="16" r="5" /></svg>
            </div>
            <div className="flex-1 bg-[#c9e8ff] flex items-center justify-center text-[15px] text-[#7bbdf5]">拖拽上传</div>
          </div>
          <div className="absolute left-[1796px] top-[7px] flex items-center gap-[36px]">
            <svg width="13" height="14" viewBox="0 0 13 14" className="stroke-[#444]"><path d="M0 7.5h13" /></svg>
            <svg width="13" height="14" viewBox="0 0 13 14" className="fill-none stroke-[#444]"><path d="M.5 3.5h9v10h-9zM3.5 3.5v-3h9v10h-3" /></svg>
            <svg width="14" height="14" viewBox="0 0 14 14" className="ml-[1px] stroke-[#444]"><path d="M.5.5l13 13M13.5.5l-13 13" /></svg>
          </div>
        </div>
        <div className="relative h-[37px] flex items-center pl-[7px]">
          {tools.map((t, i) => (
            <div key={i} className="w-[37px] h-[37px] flex items-center justify-center text-[18px] text-[#3a3a3a]">{t}</div>
          ))}
          <div className="ml-auto mr-[25px] -mt-[2px] flex gap-[15px] text-[15px] text-[#333]">
            <span className="relative w-[57px]">
              发现
              <span className="absolute left-[32px] -top-[6px] w-[25px] h-[11px] bg-[#ff4040] text-white text-[9px] leading-[11px] font-bold text-center">NEW</span>
            </span>
            <span>板块</span><span>账户</span><span>资讯</span><span>个性化</span><span>系统工具</span><span>帮助</span>
          </div>
        </div>
      </div>

      {/* chart + quote panel */}
      <div className="h-[892px] flex shrink-0">
        <div className="flex-1 flex flex-col">
          <div className="h-[24px] ml-[40px] pt-[1px] border-b border-[#808080] flex items-center text-[14.5px] text-[#333] whitespace-pre">
            <svg width="20" height="9" viewBox="0 0 20 9" className="ml-[5px] mr-[7px] fill-none stroke-[#333]" strokeWidth="2"><path d="M8 1H2.5Q1 1 1 2.5v4Q1 8 2.5 8H8M12 1h5.5Q19 1 19 2.5v4Q19 8 17.5 8H12M6 4.5h8" /></svg>
            <span>硅铁</span>
            <span className="font-['Liberation_Mono',monospace] text-[12px]">2201</span>
            <span className="text-[#ff0000] text-[10px] self-start leading-[16px] pl-[1px] w-[14px]">M</span>
            <span className="font-['Liberation_Mono',monospace] text-[12.5px] tracking-[-0.2px] w-[114px]">(CZCE  SF201)</span>
            <span className="flex items-center gap-[1px] text-[15px]">5分钟<Chevron className="stroke-[#333]" /></span>
          </div>
          <div className="flex-1 flex">
            <Sidebar />
            <ChartArea />
          </div>
        </div>
        <RightPanel />
      </div>

      {/* watchlist tabs */}
      <div className="h-[33px] bg-[#dfe0e5] shrink-0 flex items-center text-[15px] text-[#333]">
        <span className="ml-[36px] w-[74px] h-full flex items-center justify-center text-[#2f5a9e] border-b border-[#2f5a9e]">我的板块</span>
        <span className="ml-[7px]">01黑色系</span>
        <span className="ml-[14px]">02郑棉</span>
        <span className="ml-[14px]">03所有品种</span>
        <span className="ml-[14px] text-[22px] leading-none font-bold text-[#555]">+</span>
        <span className="ml-auto mr-[16px] flex items-center gap-[13px] text-[16px] text-[#5878a8]">
          <svg width="22" height="22" viewBox="0 0 18 20" className="fill-none stroke-[#2f5a9e]" strokeWidth="2.2"><path d="M3 13V9a6 6 0 0 1 12 0v4" /><rect x="1.5" y="11" width="3.5" height="7" rx="1.7" /><rect x="13" y="11" width="3.5" height="7" rx="1.7" /></svg>
          论坛提问
        </span>
      </div>

      {/* ticker */}
      <div className="h-[35px] bg-white shrink-0 flex items-center text-[15px] whitespace-nowrap">
        <span className="ml-[6px] w-[83px] text-[18px] font-bold text-[#1a5fb4] tracking-[-0.6px]">web<i className="text-[24px] leading-none">S</i>tock</span>
        <span className="ml-[42px] tracking-[0.5px] text-[#1a8a1a]">上证指数</span>
        <span className="ml-[10px] font-['Liberation_Mono',monospace] text-[14px] tracking-[0.6px] font-bold text-[#008000] whitespace-pre">3591.71 -0.46</span>
        <span className="ml-[22px] tracking-[0.5px] text-[#ff0000]">文华商品</span>
        <span className="ml-[10px] font-['Liberation_Mono',monospace] text-[14px] tracking-[0.6px] font-bold text-[#ff0000] whitespace-pre">229.40 +6.75</span>
        <span className="ml-[42px] text-[14px] text-[#333]">CRB指数</span>
        <span className="ml-[17px] font-['Liberation_Mono',monospace] text-[14px] tracking-[0.6px] font-bold text-[#333] whitespace-pre">0.00 0.00</span>
        <span className="ml-[437px] text-[#2f5a9e]">投教小科普：期货逐日盯市结算制度</span>
        <span className="ml-auto w-[67px] h-[23px] flex items-center justify-center bg-[#bdd0e3] text-[#333]">期货户</span>
        <span className="ml-[4px] w-[67px] h-[23px] flex items-center justify-center bg-[#bdd0e3] text-[#333]">外盘户</span>
        <span className="ml-[14px] w-px h-[16px] bg-[#ff0000]" />
        <span className="ml-[14px] w-[22px] h-[20px] bg-[#00e000] border-t-[14px] border-[#0a6a0a]" />
        <svg width="20" height="20" viewBox="0 0 20 20" className="ml-[8px] fill-[#2db52d]"><rect y="15" width="3.5" height="5" /><rect x="5" y="10" width="3.5" height="10" /><rect x="10" y="5" width="3.5" height="15" /><rect x="15" width="4" height="20" /></svg>
        <span className="ml-[9px] mr-[22px] text-[15px] text-black">19:19:02 - wh</span>
      </div>

      <Taskbar />
    </div>
  );
}
